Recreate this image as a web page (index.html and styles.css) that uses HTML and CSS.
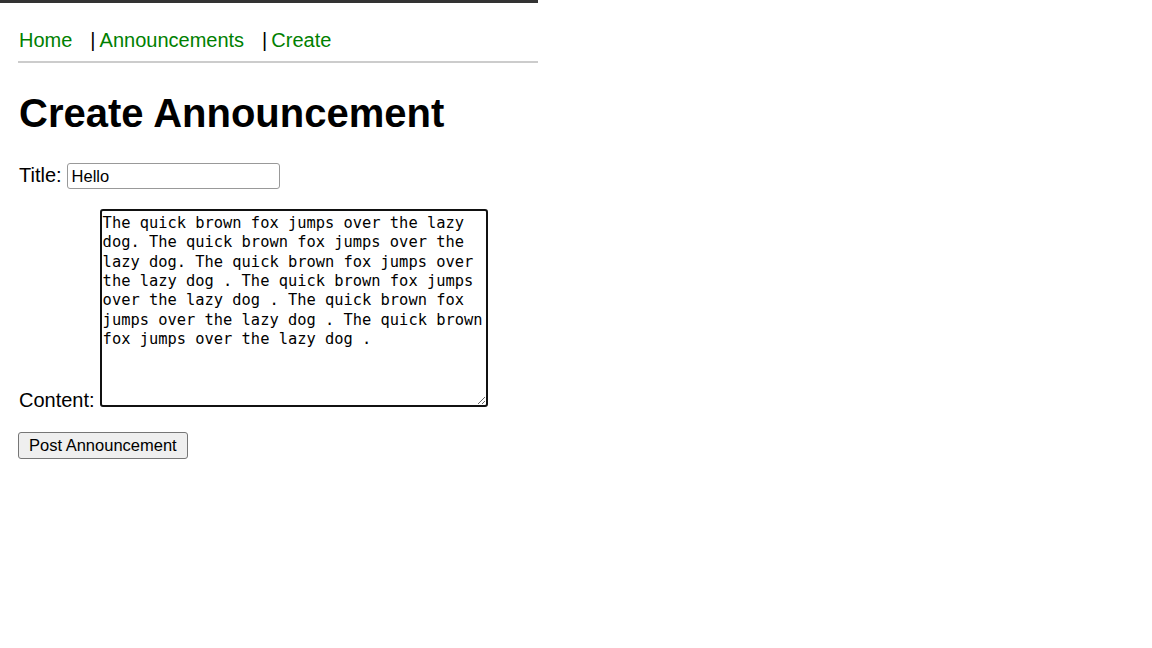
FILE: index.html
```html
<!DOCTYPE html>
<html>
<head>
<meta charset="utf-8">
<link rel="stylesheet" href="styles.css">
</head>
<body>
<div class="page">
  <nav class="nav">
    <a class="nav-link" href="#">Home</a>
    <span class="sep">|</span>
    <a class="nav-link" href="#">Announcements</a>
    <span class="sep">|</span>
    <a class="nav-link" href="#">Create</a>
  </nav>
  <h1 class="title">Create Announcement</h1>
  <form class="form">
    <div class="row title-row">
      <label class="label">Title:</label>
      <input class="text-input" type="text" value="Hello">
    </div>
    <div class="row content-row">
      <label class="label content-label">Content:</label>
      <textarea class="textarea">The quick brown fox jumps over the lazy dog. The quick brown fox jumps over the lazy dog. The quick brown fox jumps over the lazy dog . The quick brown fox jumps over the lazy dog . The quick brown fox jumps over the lazy dog . The quick brown fox jumps over the lazy dog .</textarea>
    </div>
    <div class="row">
      <button class="btn" type="button">Post Announcement</button>
    </div>
  </form>
</div>
</body>
</html>
```

FILE: styles.css
```css
html, body {
  margin: 0;
  padding: 0;
  background: #fff;
}
body {
  font-family: "Liberation Sans", Arial, sans-serif;
  font-size: 20px;
  color: #000;
}
.page {
  width: 520px;
  border-top: 3px solid #333;
  padding: 0 0 0 18px;
}
.nav {
  display: flex;
  align-items: baseline;
  padding: 26px 0 9px 1px;
  border-bottom: 2px solid #ccc;
  line-height: 23px;
}
.nav-link {
  color: #008000;
  text-decoration: none;
  margin-right: 18px;
}
.nav-link:last-child {
  margin-right: 0;
}
.sep {
  margin-right: 4px;
  color: #000;
}
.title {
  font-size: 40px;
  font-weight: bold;
  margin: 27px 0 27px 1px;
  line-height: 46px;
}
.row {
  display: flex;
}
.title-row {
  align-items: baseline;
}
.label {
  padding-left: 1px;
  margin-right: 5px;
  line-height: 23px;
}
.text-input {
  font-family: "Liberation Sans", Arial, sans-serif;
  font-size: 16.5px;
  width: 213px;
  height: 26px;
  box-sizing: border-box;
  border: 1px solid #999;
  border-radius: 3px;
  padding: 1px 4px;
  margin: 0;
}
.content-row {
  align-items: flex-end;
  margin-top: 20px;
  margin-bottom: 25px;
}
.content-label {
  margin-bottom: -5px;
}
.textarea {
  font-family: "DejaVu Sans Mono", "Liberation Mono", monospace;
  font-size: 15.4px;
  line-height: 19.33px;
  width: 388px;
  height: 198px;
  box-sizing: border-box;
  border: 2px solid #111;
  border-radius: 3px;
  padding: 3px 1px 2px;
  margin: 0;
  outline: none;
  resize: both;
  color: #000;
}
.btn {
  font-family: "Liberation Sans", Arial, sans-serif;
  font-size: 16.5px;
  height: 27px;
  padding: 0 10px;
  background: #efefef;
  border: 1px solid #767676;
  border-radius: 3px;
  color: #000;
  margin: 0;
}
```
